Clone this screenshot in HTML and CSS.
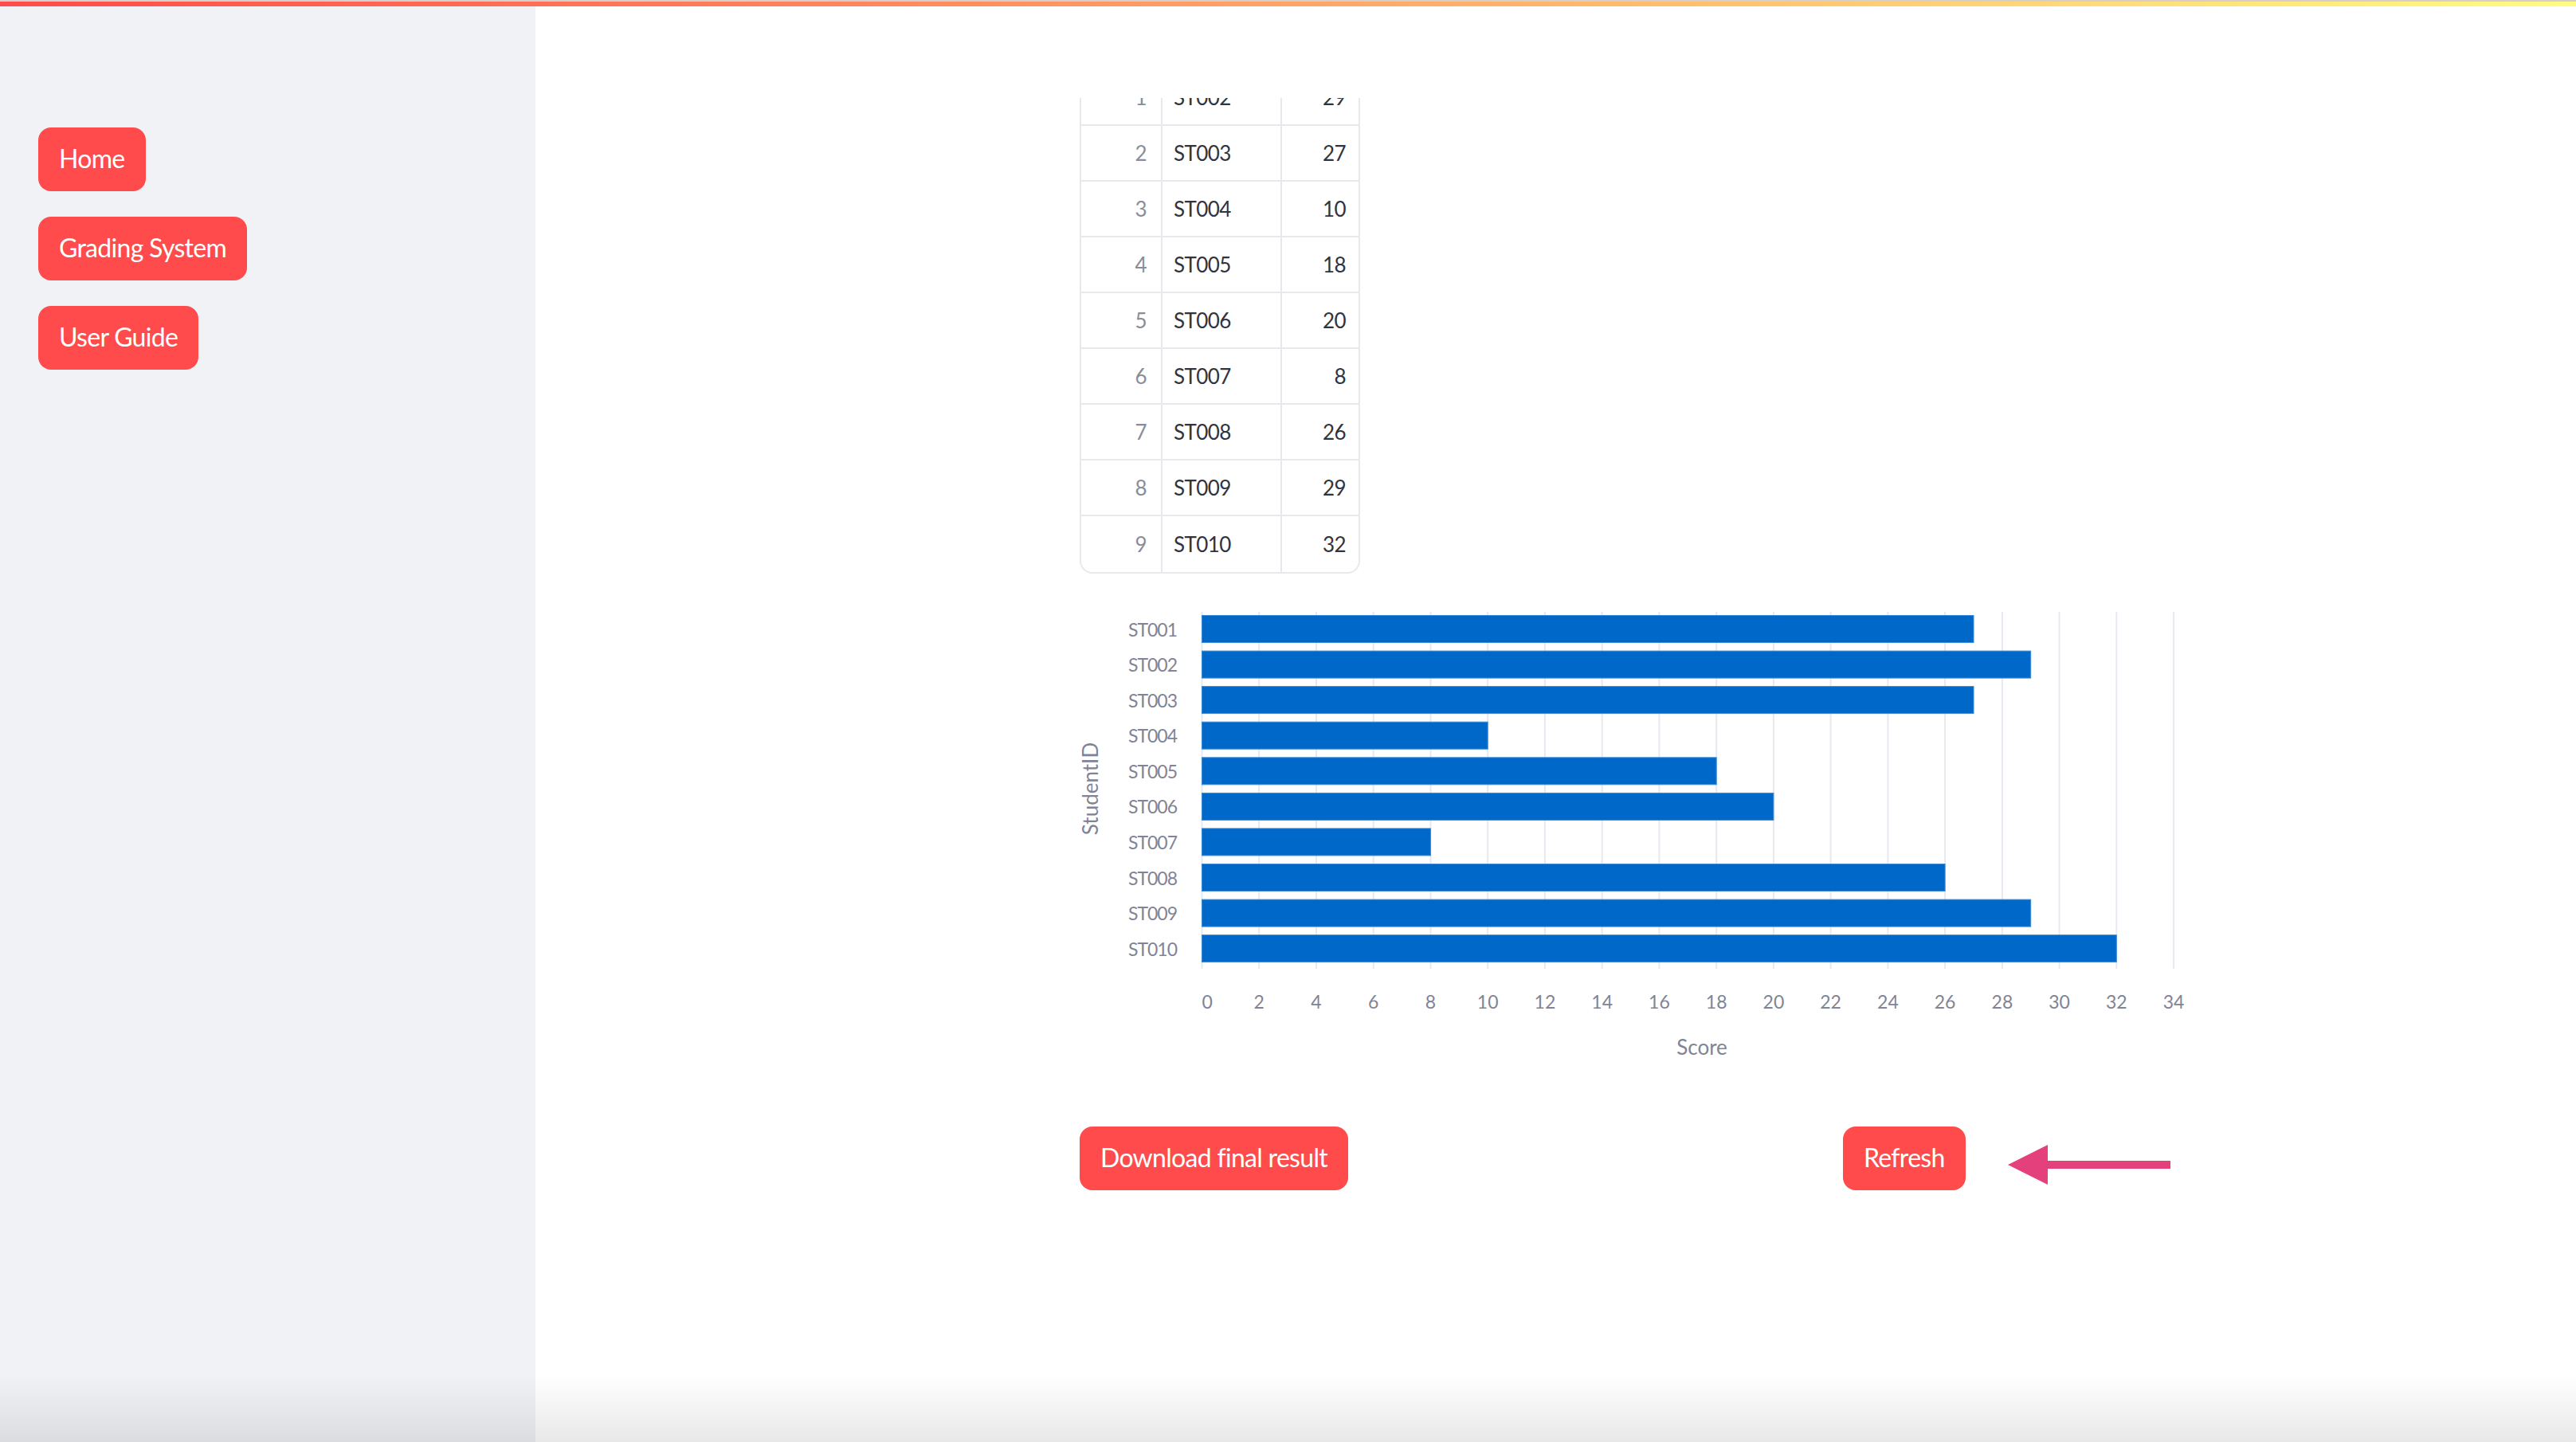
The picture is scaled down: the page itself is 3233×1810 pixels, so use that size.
FILE: index.html
```html
<!DOCTYPE html>
<html lang="en">
<head>
<meta charset="utf-8">
<title>Grading System</title>
<link rel="stylesheet" href="styles.css">
</head>
<body>
<div class="topbar"></div>
<div class="app">
  <aside class="sidebar">
    <nav class="nav">
      <button class="btn">Home</button>
      <button class="btn">Grading System</button>
      <button class="btn">User Guide</button>
    </nav>
  </aside>
  <main class="main">
    <div class="table-view">
      <div class="table">
        <div class="row"><div class="cell idx">1</div><div class="cell id">ST002</div><div class="cell num">29</div></div>
        <div class="row"><div class="cell idx">2</div><div class="cell id">ST003</div><div class="cell num">27</div></div>
        <div class="row"><div class="cell idx">3</div><div class="cell id">ST004</div><div class="cell num">10</div></div>
        <div class="row"><div class="cell idx">4</div><div class="cell id">ST005</div><div class="cell num">18</div></div>
        <div class="row"><div class="cell idx">5</div><div class="cell id">ST006</div><div class="cell num">20</div></div>
        <div class="row"><div class="cell idx">6</div><div class="cell id">ST007</div><div class="cell num">8</div></div>
        <div class="row"><div class="cell idx">7</div><div class="cell id">ST008</div><div class="cell num">26</div></div>
        <div class="row"><div class="cell idx">8</div><div class="cell id">ST009</div><div class="cell num">29</div></div>
        <div class="row"><div class="cell idx">9</div><div class="cell id">ST010</div><div class="cell num">32</div></div>
      </div>
    </div>

    <svg class="chart" width="1420" height="600" viewBox="0 0 1420 600">
      <g class="grid">
        <line x1="153.5" y1="28" x2="153.5" y2="476"/>
        <line x1="225.2" y1="28" x2="225.2" y2="476"/>
        <line x1="297" y1="28" x2="297" y2="476"/>
        <line x1="368.7" y1="28" x2="368.7" y2="476"/>
        <line x1="440.5" y1="28" x2="440.5" y2="476"/>
        <line x1="512.2" y1="28" x2="512.2" y2="476"/>
        <line x1="583.9" y1="28" x2="583.9" y2="476"/>
        <line x1="655.7" y1="28" x2="655.7" y2="476"/>
        <line x1="727.4" y1="28" x2="727.4" y2="476"/>
        <line x1="799.2" y1="28" x2="799.2" y2="476"/>
        <line x1="870.9" y1="28" x2="870.9" y2="476"/>
        <line x1="942.6" y1="28" x2="942.6" y2="476"/>
        <line x1="1014.4" y1="28" x2="1014.4" y2="476"/>
        <line x1="1086.1" y1="28" x2="1086.1" y2="476"/>
        <line x1="1157.9" y1="28" x2="1157.9" y2="476"/>
        <line x1="1229.6" y1="28" x2="1229.6" y2="476"/>
        <line x1="1301.3" y1="28" x2="1301.3" y2="476"/>
        <line x1="1373.1" y1="28" x2="1373.1" y2="476"/>
      </g>
      <g class="bars">
        <rect x="153.5" y="32.5" width="968.5" height="34"/>
        <rect x="153.5" y="77.1" width="1040.2" height="34"/>
        <rect x="153.5" y="121.6" width="968.5" height="34"/>
        <rect x="153.5" y="166.2" width="358.7" height="34"/>
        <rect x="153.5" y="210.8" width="645.7" height="34"/>
        <rect x="153.5" y="255.4" width="717.4" height="34"/>
        <rect x="153.5" y="299.9" width="287" height="34"/>
        <rect x="153.5" y="344.5" width="932.6" height="34"/>
        <rect x="153.5" y="389.1" width="1040.2" height="34"/>
        <rect x="153.5" y="433.6" width="1147.8" height="34"/>
      </g>
      <g class="ylabels">
        <text x="122" y="49.5">ST001</text>
        <text x="122" y="94.1">ST002</text>
        <text x="122" y="138.6">ST003</text>
        <text x="122" y="183.2">ST004</text>
        <text x="122" y="227.8">ST005</text>
        <text x="122" y="272.4">ST006</text>
        <text x="122" y="316.9">ST007</text>
        <text x="122" y="361.5">ST008</text>
        <text x="122" y="406.1">ST009</text>
        <text x="122" y="450.6">ST010</text>
      </g>
      <g class="xlabels">
        <text x="153.5" y="517" class="first">0</text>
        <text x="225.2" y="517">2</text>
        <text x="297" y="517">4</text>
        <text x="368.7" y="517">6</text>
        <text x="440.5" y="517">8</text>
        <text x="512.2" y="517">10</text>
        <text x="583.9" y="517">12</text>
        <text x="655.7" y="517">14</text>
        <text x="727.4" y="517">16</text>
        <text x="799.2" y="517">18</text>
        <text x="870.9" y="517">20</text>
        <text x="942.6" y="517">22</text>
        <text x="1014.4" y="517">24</text>
        <text x="1086.1" y="517">26</text>
        <text x="1157.9" y="517">28</text>
        <text x="1229.6" y="517">30</text>
        <text x="1301.3" y="517">32</text>
        <text x="1373.1" y="517">34</text>
      </g>
      <text class="axis-title" x="781" y="574">Score</text>
      <text class="axis-title" x="0" y="0" transform="translate(13 250) rotate(-90)">StudentID</text>
    </svg>

    <div class="actions">
      <div class="action-left">
        <button class="btn">Download final result</button>
      </div>
      <div class="action-right">
        <button class="btn">Refresh</button>
        <svg class="arrow" width="204" height="50" viewBox="0 0 204 50">
          <polygon points="0,25 50,0 50,20 204,20 204,30 50,30 50,50"/>
        </svg>
      </div>
    </div>
  </main>
</div>
<div class="bottom-shade"></div>
</body>
</html>
```

FILE: styles.css
```css
html, body {
  margin: 0;
  padding: 0;
}

body {
  width: 3233px;
  height: 1810px;
  overflow: hidden;
  background: #ffffff;
  font-family: Lato, "Open Sans", sans-serif;
  color: #31333f;
  position: relative;
}

.topbar {
  height: 6px;
  border-top: 2px solid #d8cdc8;
  background: linear-gradient(90deg, #ff4b4b, #fffd80);
}

.app {
  display: flex;
  height: 1802px;
}

.sidebar {
  flex: none;
  width: 672px;
  box-sizing: border-box;
  background: #f0f2f6;
  padding: 152px 0 0 48px;
}

.nav {
  display: flex;
  flex-direction: column;
  align-items: flex-start;
  gap: 32px;
}

.btn {
  height: 80px;
  border: 0;
  border-radius: 16px;
  background: #ff4b4b;
  color: #ffffff;
  font-family: Lato, "Open Sans", sans-serif;
  font-size: 32px;
  font-weight: 400;
  letter-spacing: -0.7px;
  padding: 0 26px 3px;
  white-space: nowrap;
  cursor: pointer;
}

.main {
  flex: 1;
  padding: 115px 0 0 683px;
}

/* data table (scrolled, top rows hidden under the header) */
.table-view {
  width: 352px;
  height: 597px;
  box-sizing: border-box;
  overflow: hidden;
  border: 2px solid #e8e9ed;
  border-top: 0;
  border-radius: 0 0 16px 16px;
}

.table {
  margin-top: -35px;
}

.row {
  display: grid;
  grid-template-columns: 102px 150px 96px;
  height: 70px;
  box-sizing: border-box;
  border-bottom: 2px solid #e8e9ed;
}

.row:last-child {
  border-bottom: 0;
  height: 70px;
}

.cell {
  display: flex;
  align-items: center;
  font-family: Lato, "Open Sans", sans-serif;
  font-size: 26px;
  letter-spacing: -0.6px;
  box-sizing: border-box;
}

.cell.idx {
  justify-content: flex-end;
  padding-right: 18px;
  color: #8b8d96;
  border-right: 2px solid #e8e9ed;
}

.cell.id {
  padding-left: 14px;
  border-right: 2px solid #e8e9ed;
}

.cell.num {
  justify-content: flex-end;
  padding-right: 16px;
}

/* chart */
.chart {
  display: block;
  margin-top: 20px;
  font-family: Lato, "Open Sans", sans-serif;
}

.grid line {
  stroke: #e6e9ef;
  stroke-width: 2;
}

.bars rect {
  fill: #0068c9;
  stroke: #3d8ad6;
  stroke-width: 1;
}

.ylabels text {
  fill: #808495;
  font-size: 23px;
  letter-spacing: -1px;
  text-anchor: end;
  dominant-baseline: central;
}

.xlabels text {
  fill: #808495;
  font-size: 23px;
  text-anchor: middle;
  dominant-baseline: central;
}

.xlabels text.first {
  text-anchor: start;
}

.axis-title {
  fill: #808495;
  font-size: 26px;
  text-anchor: middle;
  dominant-baseline: central;
}

/* bottom actions */
.actions {
  display: flex;
  align-items: flex-start;
  margin-top: 74px;
}

.action-left {
  width: 958px;
  flex: none;
}

.action-right {
  display: flex;
  align-items: flex-start;
}

.arrow {
  display: block;
  margin: 23px 0 0 53px;
}

.arrow polygon {
  fill: #e4407b;
}

.bottom-shade {
  position: absolute;
  left: 0;
  right: 0;
  bottom: 0;
  height: 85px;
  background: linear-gradient(to bottom, rgba(0, 0, 0, 0), rgba(0, 0, 0, 0.09));
  pointer-events: none;
}
```
